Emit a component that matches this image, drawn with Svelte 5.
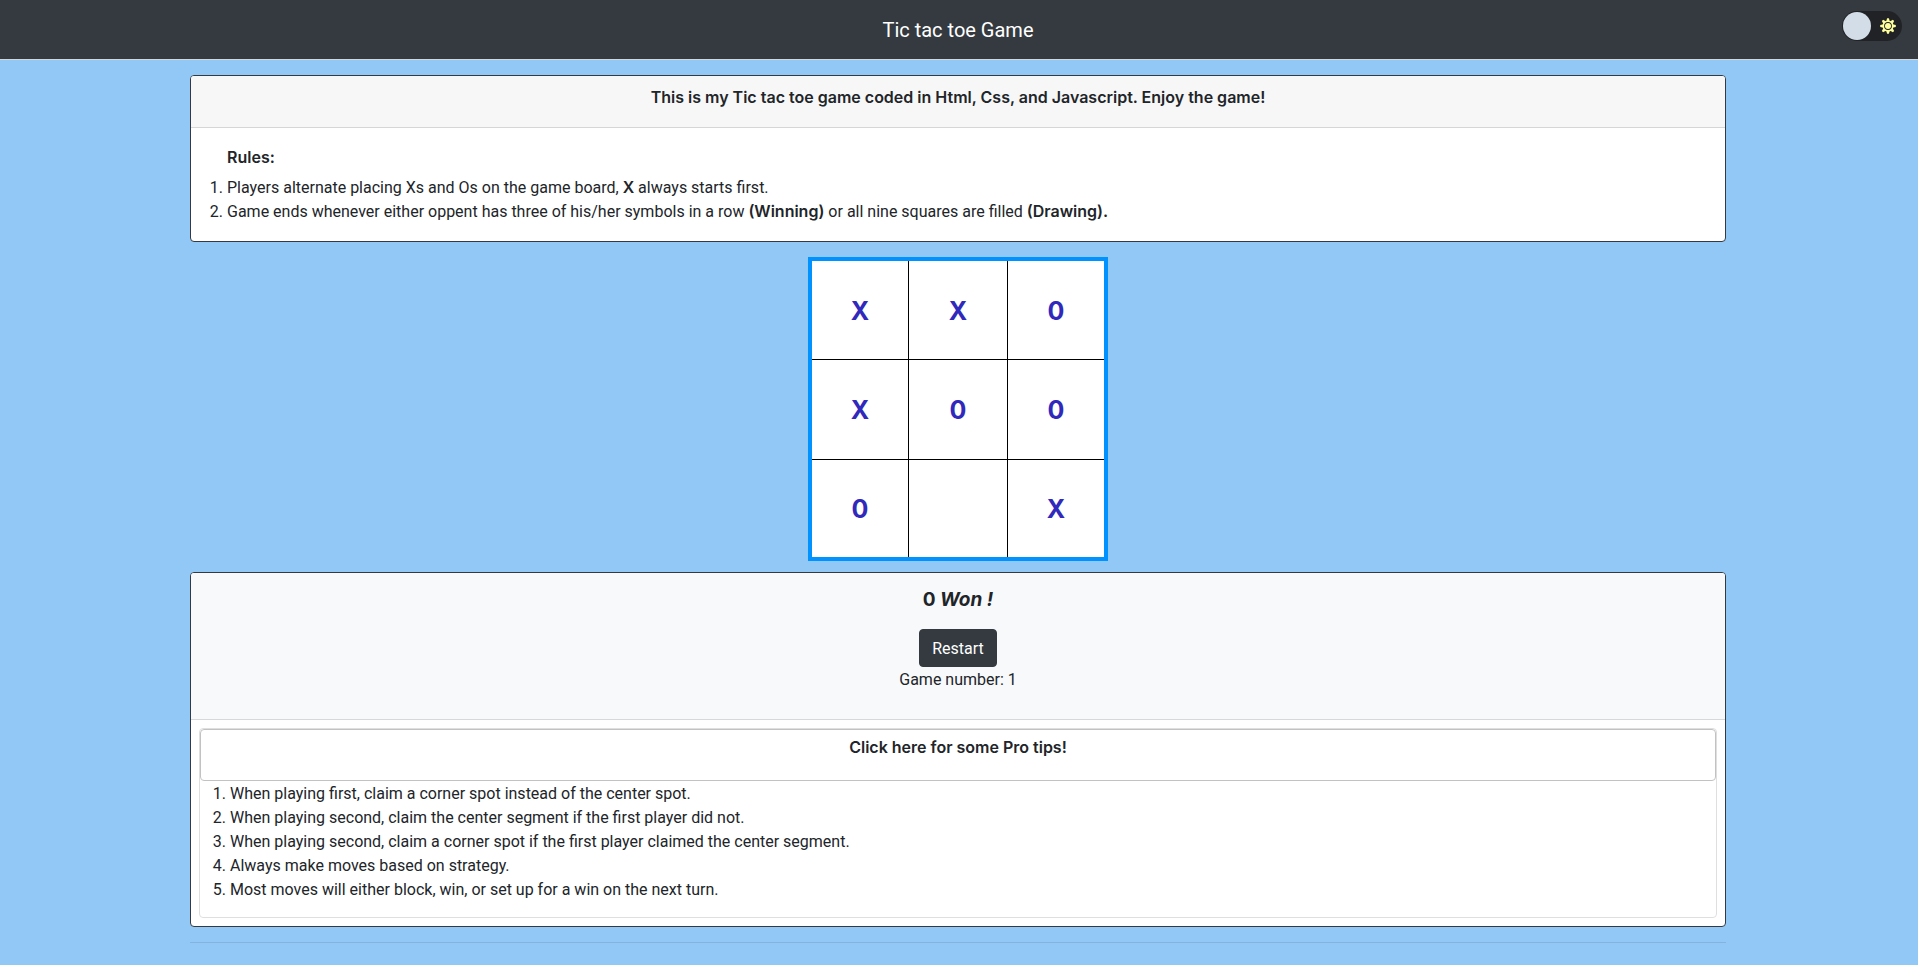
<script>
  const lines = [
    [0, 1, 2], [3, 4, 5], [6, 7, 8], [0, 3, 6],
    [1, 4, 7], [2, 5, 8], [0, 4, 8], [2, 4, 6],
  ];

  let cells = $state(['X', 'X', '0', 'X', '0', '0', '0', '', 'X']);
  let turn = $state('X');
  let game = $state(1);
  let dark = $state(false);
  let open = $state(true);

  let winner = $derived.by(() => {
    const hit = lines.find(([a, b, c]) => cells[a] && cells[a] === cells[b] && cells[a] === cells[c]);
    return hit ? cells[hit[0]] : '';
  });

  const tips = [
    'When playing first, claim a corner spot instead of the center spot.',
    'When playing second, claim the center segment if the first player did not.',
    'When playing second, claim a corner spot if the first player claimed the center segment.',
    'Always make moves based on strategy.',
    'Most moves will either block, win, or set up for a win on the next turn.',
  ];

  const rays = [0, 45, 90, 135, 180, 225, 270, 315];

  function play(i) {
    if (cells[i] || winner) return;
    cells[i] = turn;
    turn = turn === 'X' ? '0' : 'X';
  }

  function restart() {
    cells = Array(9).fill('');
    turn = 'X';
    game += 1;
  }
</script>

<div class="page" class:dark>
  <header class="topbar">
    <h1>Tic tac toe Game</h1>
    <button class="toggle" type="button" role="switch" aria-checked={dark} aria-label="Dark mode" onclick={() => (dark = !dark)}>
      <span class="knob"></span>
      <svg class="sun" viewBox="0 0 16 16" aria-hidden="true">
        {#each rays as r}
          <path d="M6.2 3.6 7.1 0.2h1.8l.9 3.4z" transform={`rotate(${r} 8 8)`} fill="currentColor" />
        {/each}
        <circle cx="8" cy="8" r="4.7" fill="none" stroke="currentColor" stroke-width="1.6" />
        <circle cx="8" cy="8" r="3" fill="currentColor" />
      </svg>
    </button>
  </header>

  <main>
    <section class="card">
      <div class="intro">This is my Tic tac toe game coded in Html, Css, and Javascript. Enjoy the game!</div>
      <div class="rules">
        <h2>Rules:</h2>
        <ol>
          <li>Players alternate placing Xs and Os on the game board, <b>X</b> always starts first.</li>
          <li>Game ends whenever either oppent has three of his/her symbols in a row <b>(Winning)</b> or all nine squares are filled <b>(Drawing).</b></li>
        </ol>
      </div>
    </section>

    <div class="board">
      {#each cells as cell, i}
        <button class="cell" type="button" aria-label={cell ? undefined : 'Empty square'} onclick={() => play(i)}>{cell}</button>
      {/each}
    </div>

    <section class="card">
      <div class="status">
        <p class="result">
          {#if winner}{winner} <i>Won !</i>{:else}{turn} <i>Turn</i>{/if}
        </p>
        <button class="restart" type="button" onclick={restart}>Restart</button>
        <p class="count">Game number: {game}</p>
      </div>
      <div class="tips">
        <button class="tips-head" type="button" aria-expanded={open} onclick={() => (open = !open)}>Click here for some Pro tips!</button>
        {#if open}
          <ol>
            {#each tips as tip}
              <li>{tip}</li>
            {/each}
          </ol>
        {/if}
      </div>
    </section>
    <hr />
  </main>
</div>

<style>
  :global(body) {
    margin: 0;
    background: #91c8f6;
  }
  .page {
    min-height: 100vh;
    box-sizing: border-box;
    background: #91c8f6;
    color: #212529;
    font: 16px/24px Roboto, 'Liberation Sans', sans-serif;
  }
  .page.dark {
    background: #1d2b38;
  }
  button {
    font: inherit;
    color: inherit;
    cursor: pointer;
  }
  h1, h2, p, ol {
    margin: 0;
    font-size: inherit;
  }
  .topbar {
    display: grid;
    grid-template-columns: 1fr auto 1fr;
    padding: 11px 16px 0 14px;
    height: 48px;
    background: #343a40;
    border-bottom: 1px solid #d5d6d7;
  }
  h1 {
    grid-column: 2;
    padding-top: 4px;
    font-size: 20px;
    line-height: 30px;
    font-weight: 400;
    color: #fff;
  }
  .toggle {
    justify-self: end;
    display: flex;
    align-items: center;
    justify-content: space-between;
    box-sizing: border-box;
    width: 60px;
    height: 30px;
    padding: 0 6px 0 1px;
    border: 0;
    border-radius: 15px;
    background: #202225;
  }
  .knob {
    width: 28px;
    height: 28px;
    border-radius: 50%;
    background: #d3dde7;
  }
  .sun {
    width: 16px;
    height: 16px;
    color: #ffff9e;
  }
  main {
    padding: 15px 192px 0 190px;
  }
  .card {
    border: 1px solid #343a40;
    border-radius: 4px;
    background: #fff;
    overflow: hidden;
  }
  .intro,
  h2,
  b,
  .cell,
  .result,
  .tips-head {
    font-family: Inter, 'Liberation Sans', sans-serif;
    font-weight: 600;
  }
  .intro {
    padding: 9px 20px 18px;
    background: #f7f7f7;
    border-bottom: 1px solid #d6d6d6;
    text-align: center;
  }
  .rules {
    padding: 17px 16px 17px 36px;
  }
  h2 {
    margin-bottom: 7px;
  }
  .rules ol {
    padding: 0;
  }
  b {
    line-height: 20px;
  }
  .board {
    display: grid;
    grid-template-columns: 96px 98px 96px;
    grid-template-rows: 98px 99px 97px;
    gap: 1px;
    width: max-content;
    margin: 15px auto 11px;
    border: 4px solid #0093ff;
    background: #000;
  }
  .cell {
    padding: 1px 0 0;
    border: 0;
    background: #fff;
    color: #3029bb;
    font-size: 25px;
    font-weight: 700;
  }
  .status {
    display: flex;
    flex-direction: column;
    align-items: center;
    padding: 12px 20px 27px;
    background: #f8f9fb;
    border-bottom: 1px solid #d6d8da;
  }
  .result {
    margin-bottom: 14px;
    font-size: 19px;
    line-height: 30px;
    font-weight: 700;
  }
  .restart {
    padding: 7px 12px 5px;
    border: 1px solid #343a40;
    border-radius: 4px;
    background: #343a40;
    color: #fff;
  }
  .count {
    margin-top: 1px;
  }
  .tips {
    margin: 8px;
    border: 1px solid #dfdfdf;
    border-radius: 4px;
  }
  .tips-head {
    display: block;
    width: 100%;
    padding: 5px 12px 21px;
    border: 1px solid #c2c2c2;
    border-radius: 4px;
    background: #fff;
  }
  .tips ol {
    padding: 1px 16px 15px 30px;
  }
  hr {
    margin: 15px 0 0;
    border: 0;
    border-top: 1px solid #82b4dd;
  }
</style>
